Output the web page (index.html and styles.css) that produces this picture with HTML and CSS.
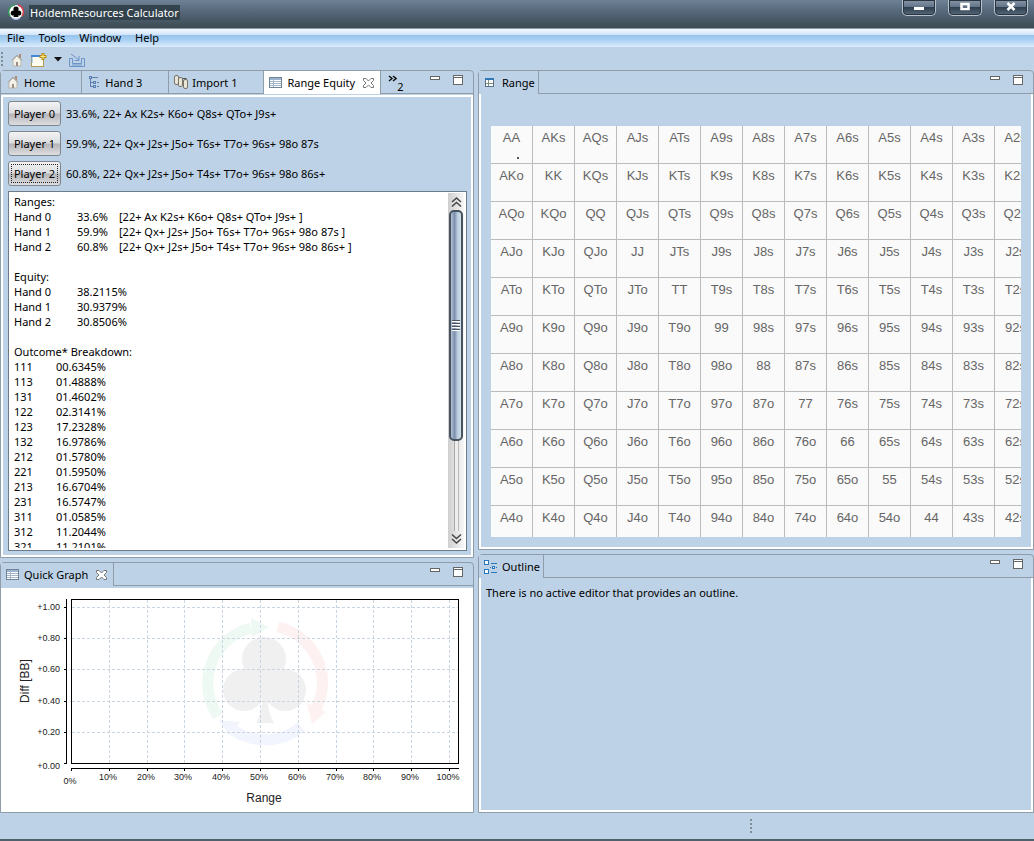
FILE: index.html
```html
<!DOCTYPE html>
<html lang="en">
<head>
    <meta charset="UTF-8">
    <meta name="viewport" content="width=device-width, initial-scale=1.0">
    <title>HoldemResources Calculator</title>
    <link rel="stylesheet" href="styles.css">
</head>
<body>
    <header class="titlebar">
        <svg class="logo" width="16" height="16" viewBox="0 0 16 16">
            <circle cx="8" cy="8" r="7" fill="#fff"/>
            <path d="M2 12A7 7 0 0 1 7 1" fill="none" stroke="#3a9a5c" stroke-width="1.5"/>
            <path d="M10 1A7 7 0 0 1 14 12" fill="none" stroke="#d8424a" stroke-width="1.5"/>
            <path d="M4 14A7 7 0 0 0 12 14" fill="none" stroke="#a9b9e0" stroke-width="1.5"/>
            <circle cx="8" cy="5" r="2.6"/><circle cx="5.3" cy="9" r="2.6"/><circle cx="10.7" cy="9" r="2.6"/>
            <path d="M7 7h2l1.500 6h-5z"/>
        </svg>
        <span class="title">HoldemResources Calculator</span>
        <div class="window-buttons">
            <button aria-label="Minimize"><svg width="12" height="12"><rect x="1" y="7" width="10" height="3" fill="#fff"/></svg></button>
            <button aria-label="Maximize"><svg width="12" height="12"><rect x="2.500" y="4" width="7" height="5" fill="none" stroke="#fff" stroke-width="2.500"/></svg></button>
            <button aria-label="Close"><svg width="12" height="12"><path d="M2.500 3l7 7M9.500 3l-7 7" stroke="#fff" stroke-width="2.500"/></svg></button>
        </div>
    </header>

    <nav class="menubar">
        <button>File</button>
        <button>Tools</button>
        <button>Window</button>
        <button>Help</button>
    </nav>

    <div class="toolbar">
        <span class="grip"></span>
        <button aria-label="Home"><svg width="14" height="14" viewBox="0 0 14 14"><use href="#home"/></svg></button>
        <button aria-label="New hand">
            <svg width="16" height="14" viewBox="0 0 16 14">
                <rect x=".5" y="2.500" width="12" height="11" fill="#fffdf0" stroke="#b49b52"/>
                <path d="M0 2h10v2H0z" fill="#3f86d4"/><path d="M1 4v6" stroke="#78a9dc"/>
                <path d="M12 0v7M8.500 3.500h7" stroke="#b58b19" stroke-width="3"/><path d="M12 1v5M9.500 3.500h5" stroke="#ffe98a"/>
            </svg>
        </button>
        <button aria-label="New hand menu"><svg width="8" height="5"><path d="M0 0h8l-4 4.500z" fill="#111"/></svg></button>
        <button aria-label="Import">
            <svg width="16" height="14" viewBox="0 0 16 14" fill="none" stroke="#6b94c8">
                <path d="M.5 5.500h3v5h9v-5h3v8H.5z"/><path d="M2 1l8 6M10 3v4.500H5.500M3 12h10"/>
            </svg>
        </button>
    </div>

    <main class="workbench">
        <div class="column column-left">
            <section class="pane pane-equity">
                <div class="tabs" role="tablist">
                    <button class="tab spare" role="tab"><svg width="14" height="14" viewBox="0 0 14 14"><use href="#home"/></svg>Home</button>
                    <button class="tab spare" role="tab">
                        <svg width="14" height="14" viewBox="0 0 14 14" fill="none" stroke="#5b7fae"><path d="M3.500 4v8M3.500 7.500h3M3.500 11.500h3M5 2.500h6M10 7.500h2M10 11.500h2"/><rect x="2.500" y="1.500" width="2" height="2"/><rect x="6.500" y="6.500" width="2" height="2"/><rect x="6.500" y="10.500" width="2" height="2"/></svg>Hand 3
                    </button>
                    <button class="tab spare" role="tab">
                        <svg width="14" height="14" viewBox="0 0 14 14" fill="#e9e6d8" stroke="#77746a"><rect x=".5" y=".5" width="4" height="9" rx="1.500"/><rect x="4.500" y="2.500" width="4" height="9" rx="1.500"/><rect x="9.500" y="4.500" width="4" height="9" rx="1.500"/><path d="M8.500 3.500h4" stroke="#555"/></svg>Import 1
                    </button>
                    <button class="tab active" role="tab" aria-selected="true">
                        <svg width="14" height="14" viewBox="0 0 14 14"><use href="#grid"/></svg>Range Equity
                        <svg class="close" width="13" height="12" viewBox="0 0 13 12"><use href="#close"/></svg>
                    </button>
                    <button class="more" aria-label="Show 2 more tabs">
                        <svg width="9" height="8" fill="none" stroke="#111" stroke-width="1.500"><path d="M1 1l3 2.500L1 6M5 1l3 2.500L5 6"/></svg><span>2</span>
                    </button>
                    <div class="pane-buttons">
                        <button aria-label="Minimize"><svg width="11" height="11"><use href="#min"/></svg></button>
                        <button aria-label="Maximize"><svg width="11" height="11"><use href="#max"/></svg></button>
                    </div>
                </div>
                <div class="equity">
                    <div class="player"><button id="p0">Player 0</button><label for="p0">33.6%, 22+ Ax K2s+ K6o+ Q8s+ QTo+ J9s+</label></div>
                    <div class="player"><button id="p1">Player 1</button><label for="p1">59.9%, 22+ Qx+ J2s+ J5o+ T6s+ T7o+ 96s+ 98o 87s</label></div>
                    <div class="player"><button id="p2" class="focused">Player 2</button><label for="p2">60.8%, 22+ Qx+ J2s+ J5o+ T4s+ T7o+ 96s+ 98o 86s+</label></div>
                    <div class="output">
                        <textarea readonly aria-label="Results">Ranges:
Hand 0&#9;&#9;33.6%&#9;[22+ Ax K2s+ K6o+ Q8s+ QTo+ J9s+ ]
Hand 1&#9;&#9;59.9%&#9;[22+ Qx+ J2s+ J5o+ T6s+ T7o+ 96s+ 98o 87s ]
Hand 2&#9;&#9;60.8%&#9;[22+ Qx+ J2s+ J5o+ T4s+ T7o+ 96s+ 98o 86s+ ]

Equity:
Hand 0&#9;&#9;38.2115%
Hand 1&#9;&#9;30.9379%
Hand 2&#9;&#9;30.8506%

Outcome* Breakdown:
111&#9;&#9;00.6345%
113&#9;&#9;01.4888%
131&#9;&#9;01.4602%
122&#9;&#9;02.3141%
123&#9;&#9;17.2328%
132&#9;&#9;16.9786%
212&#9;&#9;01.5780%
221&#9;&#9;01.5950%
213&#9;&#9;16.6704%
231&#9;&#9;16.5747%
311&#9;&#9;01.0585%
312&#9;&#9;11.2044%
321&#9;&#9;11.2101%</textarea>
                        <div class="scrollbar">
                            <svg class="arrow" width="11" height="12" fill="none" stroke="#444" stroke-width="1.500"><path d="M1 6l4.500-4L10 6M1 10.500l4.500-4 4.500 4"/></svg>
                            <div class="track">
                                <div class="thumb"><svg width="8" height="11"><path d="M0 1.500h8M0 4.500h8M0 7.500h8M0 10.500h8" stroke="#fff"/><path d="M0 .5h8M0 3.500h8M0 6.500h8M0 9.500h8" stroke="#4b5560"/></svg></div>
                            </div>
                            <svg class="arrow" width="11" height="12" fill="none" stroke="#444" stroke-width="1.500"><path d="M1 1.500l4.500 4 4.500-4M1 6l4.500 4L10 6"/></svg>
                        </div>
                    </div>
                </div>
            </section>

            <section class="pane pane-graph">
                <div class="tabs" role="tablist">
                    <button class="tab" role="tab" aria-selected="true">
                        <svg width="14" height="14" viewBox="0 0 14 14"><use href="#grid"/></svg>Quick Graph
                        <svg class="close" width="13" height="12" viewBox="0 0 13 12"><use href="#close"/></svg>
                    </button>
                    <div class="pane-buttons">
                        <button aria-label="Minimize"><svg width="11" height="11"><use href="#min"/></svg></button>
                        <button aria-label="Maximize"><svg width="11" height="11"><use href="#max"/></svg></button>
                    </div>
                </div>
                <div class="graph">
                    <svg class="chart" viewBox="0 0 472 224">
                        <g fill="none" stroke-width="11" opacity=".06">
                            <path d="M217 128A57 57 0 0 1 250 40" stroke="#00a050"/>
                            <path d="M277 39A57 57 0 0 1 315 121" stroke="#e02020"/>
                            <path d="M300 139A57 57 0 0 1 228 139" stroke="#3060e0"/>
                            <path d="M250 30l18 9-17 10z" fill="#00a050"/>
                            <path d="M306 115l19 9-14 12z" fill="#e02020"/>
                            <path d="M218 132l21 2-11 13z" fill="#3060e0"/>
                        </g>
                        <g fill="#f0f0f0">
                            <circle cx="263" cy="71" r="22"/><circle cx="243" cy="102" r="21"/><circle cx="284" cy="102" r="21"/>
                            <path d="M256 85h15l7 22h-12q1 18 7 28h-18q6-10 7-28h-12z"/>
                        </g>
                        <g id="chartGrid" class="grid-lines"></g>
                        <rect class="axis" x="70.500" y="11.500" width="387" height="164"/>
                        <path class="axis" d="M65.500 11v165M70 180.500h388"/>
                        <g id="chartTicks"></g>
                        <text class="axis-title" x="263" y="214">Range</text>
                        <text class="axis-title" transform="translate(28 93) rotate(-90)">Diff [BB]</text>
                    </svg>
                </div>
            </section>
        </div>

        <div class="column column-right">
            <section class="pane pane-range">
                <div class="tabs" role="tablist">
                    <button class="tab" role="tab" aria-selected="true">
                        <svg width="14" height="14" viewBox="0 0 14 14"><rect x="1.500" y="2.500" width="8" height="8" fill="#fff" stroke="#5d7187"/><path d="M1 2h9v2H1z" fill="#2f78b8"/><path d="M2 7.500h7M4.500 4v6" stroke="#7b8c80"/></svg>Range
                    </button>
                    <div class="pane-buttons">
                        <button aria-label="Minimize"><svg width="11" height="11"><use href="#min"/></svg></button>
                        <button aria-label="Maximize"><svg width="11" height="11"><use href="#max"/></svg></button>
                    </div>
                </div>
                <div class="range">
                    <div class="range-view">
                        <table id="rangeTable"></table>
                    </div>
                </div>
            </section>

            <section class="pane pane-outline">
                <div class="tabs" role="tablist">
                    <button class="tab" role="tab" aria-selected="true">
                        <svg width="14" height="14" viewBox="0 0 14 14" fill="#fff" stroke="#2a78ba"><rect x=".5" y=".5" width="4" height="4"/><rect x=".5" y="9.500" width="4" height="4"/><path d="M7 3.500h6M7 12.500h6M6 7.500h1M12 7.500h1"/><rect x="8.500" y="6.500" width="2" height="2"/></svg>Outline
                    </button>
                    <div class="pane-buttons">
                        <button aria-label="Minimize"><svg width="11" height="11"><use href="#min"/></svg></button>
                        <button aria-label="Maximize"><svg width="11" height="11"><use href="#max"/></svg></button>
                    </div>
                </div>
                <div class="outline">There is no active editor that provides an outline.</div>
            </section>
        </div>
    </main>

    <footer class="statusbar"><span class="grip"></span></footer>

    <!-- shared icons -->
    <svg class="defs" width="0" height="0">
        <defs>
            <g id="home"><path d="M9 1h2v4H9z" fill="#b08b78"/><path d="M3 7l4-4 4 4v6H3z" fill="#f4f1e8" stroke="#b9b6a7"/><path d="M1.500 7.500L7 2l5.500 5.500" fill="none" stroke="#a3aaae"/><path d="M6 9h2v4H6z" fill="#9a8f83"/></g>
            <g id="grid"><rect x=".5" y="1.500" width="12" height="10" fill="#fff" stroke="#6f8499"/><path d="M1 2h11v2H1z" fill="#9db4cc"/><path d="M1 5.500h11M1 7.500h11M1 9.500h11M4.500 4v7" stroke="#a3b5c6"/></g>
            <g id="close"><path d="M1.500 1.500h2.500l2.500 2.500L9 1.500h2.500V3.500L9 6l2.500 2.500v2H9L6.500 8 4 10.500H1.500v-2L4 6 1.500 3.500z" fill="#fff" stroke="#777"/></g>
            <g id="min"><rect x=".5" y="1.500" width="9" height="3" fill="#fff" stroke="#666"/></g>
            <g id="max"><rect x=".5" y=".5" width="9" height="9" fill="#fff" stroke="#666"/><path d="M1 2.500h9" stroke="#666"/></g>
        </defs>
    </svg>

    <script src="script.js"></script>
</body>
</html>
```
FILE: styles.css
```css
* {
    box-sizing: border-box;
}
body {
    margin: 0;
    height: 100vh;
    display: flex;
    flex-direction: column;
    overflow: hidden;
    background: #bdd2e6;
    color: #000;
    font: 11px/15px "Noto Sans", "Open Sans", sans-serif;
}
button {
    margin: 0;
    padding: 0;
    border: 0;
    background: none;
    color: inherit;
    font: inherit;
}
svg {
    display: block;
    flex: none;
}
.defs {
    position: absolute;
}

/* window frame */
.titlebar {
    height: 29px;
    flex: none;
    display: flex;
    align-items: center;
    padding: 0 6px 4px 8px;
    gap: 5px;
    background: linear-gradient(#6e8196, #56687a 40%, #3c4b53);
    border-bottom: 1px solid #8b9aa5;
}
.title {
    background: #32434d;
    color: #fff;
    padding: 0 1px;
}
.window-buttons {
    display: flex;
    gap: 12px;
    margin-left: auto;
    align-self: flex-start;
}
.window-buttons button {
    width: 34px;
    height: 16px;
    display: flex;
    justify-content: center;
    border: 1px solid #b6c2cd;
    border-top: 0;
    border-radius: 0 0 5px 5px;
    background: linear-gradient(#8796a6, #63758a 45%, #2f3f50 50%, #57697a);
    box-shadow: inset 0 0 0 1px #28343f;
}
.menubar {
    height: 18px;
    flex: none;
    display: flex;
    align-items: center;
    gap: 14px;
    padding: 0 7px 1px;
    background: linear-gradient(#f4f9ff, #cfe2f8 34%, #97c4ec 36%, #a9d0f3 60%, #dcecfa);
}
.toolbar {
    height: 23px;
    flex: none;
    display: flex;
    align-items: center;
    gap: 7px;
    padding: 2px 1px 0;
}
.grip {
    width: 2px;
    height: 16px;
    background: repeating-linear-gradient(#7f8d99 0 2px, transparent 2px 4px);
}

/* panes */
.workbench {
    flex: 1;
    min-height: 0;
    display: flex;
    gap: 4px;
}
.column {
    min-width: 0;
    display: flex;
    flex-direction: column;
    gap: 4px;
}
.column-left {
    flex: 474 1 0;
}
.column-right {
    flex: 556 1 0;
}
.pane {
    min-height: 0;
    display: flex;
    flex-direction: column;
    border: 1px solid #8f9dab;
    border-radius: 4px 4px 0 0;
}
.pane-equity {
    flex: 489 1 0;
}
.pane-graph {
    flex: 250 1 0;
}
.pane-range {
    flex: 481 1 0;
}
.pane-outline {
    flex: 258 1 0;
}
.tabs {
    height: 23px;
    flex: none;
    display: flex;
    border-bottom: 1px solid #8f9dab;
}
.tab {
    height: 23px;
    display: flex;
    align-items: center;
    gap: 4px;
    padding: 0 3px 0 5px;
    border-right: 1px solid #8f9dab;
    background: #bdd2e6;
    white-space: nowrap;
}
.tab.spare {
    height: 22px;
    padding-right: 26px;
}
.tab.active {
    background: #fff;
}
.tab .close {
    margin: 0 2px 0 3px;
}
.more {
    display: flex;
    padding: 4px 7px;
}
.more span {
    padding-top: 4px;
}
.pane-buttons {
    display: flex;
    gap: 12px;
    margin-left: auto;
    padding: 4px 9px;
}
.pane-buttons button {
    height: 11px;
}

/* range equity */
.equity {
    flex: 1;
    min-height: 0;
    display: flex;
    flex-direction: column;
    margin-top: 1px;
    border: 2px solid #fff;
    padding: 4px 4px 4px 5px;
}
.player {
    height: 30px;
    flex: none;
    display: flex;
    align-items: flex-start;
    gap: 5px;
}
.player button {
    width: 53px;
    height: 25px;
    border: 1px solid #7d8791;
    border-radius: 3px;
    background: linear-gradient(#f3f3f4, #dcdde0 48%, #b5b5b9 52%, #dedee1);
    white-space: nowrap;
}
.player .focused {
    outline: 1px dotted #222;
    outline-offset: -4px;
}
.player label {
    line-height: 25px;
    white-space: nowrap;
}
.output {
    flex: 1;
    min-height: 0;
    display: flex;
    padding: 1px 2px 2px 0;
    background: #fff;
    border: 1px solid #6d7c8a;
}
.output textarea {
    flex: 1;
    min-width: 0;
    border: 0;
    padding: 1px 5px;
    background: none;
    color: inherit;
    font: inherit;
    resize: none;
    overflow: hidden;
    white-space: pre;
    tab-size: 21px;
}
.scrollbar {
    width: 16px;
    display: flex;
    flex-direction: column;
    align-items: center;
    padding: 3px 0;
    gap: 2px;
    background: linear-gradient(90deg, #cfcfcf, #f7f7f7);
}
.track {
    flex: 1;
    width: 14px;
    background: linear-gradient(90deg, transparent 5px, #a9a9a9 5px 6px, #eee 6px 9px, #bbb 9px 10px, transparent 10px);
}
.thumb {
    height: 72%;
    display: flex;
    align-items: center;
    justify-content: center;
    border: 2px solid #47545f;
    border-radius: 5px;
    background: linear-gradient(90deg, #b3c2d6, #7e90ad 35%, #b9cbdc 65%, #d3e1ec);
}

/* quick graph */
.graph {
    flex: 1;
    min-height: 0;
    margin-top: 2px;
    background: #fff;
}
.chart {
    width: 100%;
}
.chart text {
    font-family: "Liberation Sans", Arial, sans-serif;
    font-size: 9px;
    fill: #222;
    text-anchor: middle;
}
.chart .tick-y {
    text-anchor: end;
}
.chart .axis-title {
    font-size: 12px;
}
.axis {
    fill: none;
    stroke: #000;
}
.grid-lines {
    stroke: #c9d5e0;
    stroke-dasharray: 3 2;
}

/* range table */
.range {
    flex: 1;
    min-height: 0;
    display: flex;
    border: 2px solid #fff;
    border-top: 0;
    padding: 32px 10px 10px;
}
.range-view {
    flex: 1;
    min-width: 0;
    overflow: hidden;
    background: #fafafa;
}
.range-view table {
    width: 546px;
    table-layout: fixed;
    border-collapse: separate;
    border-spacing: 0;
    font: 13px/15px "Liberation Sans", Arial, sans-serif;
    color: #666;
}
.range-view td {
    height: 38px;
    padding: 4px 0 0;
    border-right: 1px solid #bbb;
    border-bottom: 1px solid #bbb;
    text-align: center;
    vertical-align: top;
}
.mark {
    display: block;
    width: 2px;
    height: 2px;
    margin: 12px 0 0 26px;
    background: #555;
}
.outline {
    flex: 1;
    border: 2px solid #fff;
    border-top: 0;
    padding: 7px 5px;
}
.statusbar {
    height: 28px;
    flex: none;
    display: flex;
    justify-content: center;
    padding: 6px 0 0 467px;
    border-bottom: 2px solid #50616e;
}
```
FILE: script.js
```js
const ranks = "AKQJT98765432";
const visibleRows = 11;

function fillRangeTable() {
    const table = document.getElementById("rangeTable");
    for (let r = 0; r < visibleRows; r++) {
        const row = table.insertRow();
        for (let c = 0; c < ranks.length; c++) {
            let hand = ranks[r] + ranks[c];
            if (c > r) hand += "s";
            if (c < r) hand = ranks[c] + ranks[r] + "o";
            row.insertCell().textContent = hand;
        }
    }
    const mark = document.createElement("span");
    mark.className = "mark";
    table.rows[0].cells[0].appendChild(mark);
}

function drawChart() {
    let lines = "";
    let ticks = "";
    for (let i = 0; i <= 10; i++) {
        const x = Math.round(70 + i * 37.8) + 0.5;
        if (i > 0) lines += `<path d="M${x} 12v163"/>`;
        ticks += `<path class="axis" d="M${x} 181v2"/>`;
        ticks += `<text x="${x - 1.5}" y="${i === 0 ? 196 : 192}">${i * 10}%</text>`;
    }
    for (let i = 0; i <= 5; i++) {
        const y = Math.round(175 - i * 31.2) + 0.5;
        if (i > 0) lines += `<path d="M71 ${y}h386"/>`;
        ticks += `<path class="axis" d="M63 ${y}h2"/>`;
        ticks += `<text class="tick-y" x="59" y="${i === 0 ? y + 5 : y + 2}">+${(i * 0.2).toFixed(2)}</text>`;
    }
    document.getElementById("chartGrid").innerHTML = lines;
    document.getElementById("chartTicks").innerHTML = ticks;
}

fillRangeTable();
drawChart();
```
